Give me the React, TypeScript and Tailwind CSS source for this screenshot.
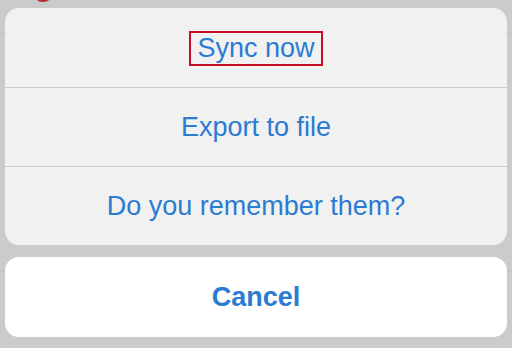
import React from 'react';

const actions = ['Sync now', 'Export to file', 'Do you remember them?'];

export default function App() {
  return (
    <div
      className="relative h-[348px] w-[512px] overflow-hidden bg-[#cbcbcb] px-[5px] pt-[8px]"
      style={{ fontFamily: '"Liberation Sans", Arial, sans-serif' }}
    >
      {/* bits of the page behind the sheet */}
      <div className="absolute left-[32px] top-[-20px] h-[22px] w-[22px] rounded-full bg-[#b8283a]" />
      <div className="absolute left-0 right-0 top-[33px] h-px bg-[#bdbdbd]" />
      <div className="absolute left-0 right-0 top-[270px] h-px bg-[#bdbdbd]" />

      <div className="relative flex flex-col overflow-hidden rounded-[14px] bg-[#f1f1f1]">
        {actions.map((label, i) => (
          <div
            key={label}
            className={`flex items-center justify-center ${i === 2 ? 'h-[78px]' : 'border-b border-[#c9c9c9]'} ${i === 0 ? 'h-[80px] pt-[1px]' : ''} ${i === 1 ? 'h-[79px]' : ''}`}
          >
            {i === 0 ? (
              <span className="inline-block border-2 border-[#c60d22] px-[6px] text-[27px] leading-[31px] text-[#2b7bd3]">
                {label}
              </span>
            ) : (
              <span className="text-[27px] leading-[31px] text-[#2b7bd3]">{label}</span>
            )}
          </div>
        ))}
      </div>

      <div className="relative mt-[12px] flex h-[80px] items-center justify-center rounded-[14px] bg-white">
        <span className="text-[27px] font-bold leading-[31px] text-[#2b7bd3]">Cancel</span>
      </div>
    </div>
  );
}
